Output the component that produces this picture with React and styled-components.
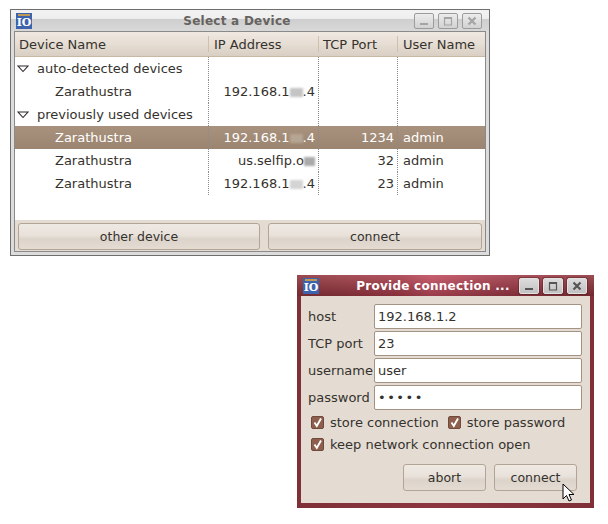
import React from "react";
import styled, { createGlobalStyle } from "styled-components";

const Global = createGlobalStyle`
  html, body { margin: 0; padding: 0; background: #fff; }
  body {
    font-family: "DejaVu Sans", sans-serif;
    font-size: 13px;
    color: #35322d;
  }
`;

const Page = styled.div`
  width: 608px;
  height: 524px;
  padding: 9px 0 0 10px;
  box-sizing: border-box;
  overflow: hidden;
`;

const DeviceWindow = styled.div`
  width: 480px;
  height: 247px;
  box-sizing: border-box;
  border: 1px solid #6f6f6f;
  background: #dcdcdc;
  display: flex;
  flex-direction: column;
`;

const TitleBar = styled.div`
  height: 21px;
  flex: none;
  display: flex;
  align-items: center;
  padding: 0 7px 0 ${(p) => (p.$active ? 6 : 5)}px;
  background: ${(p) =>
    p.$active
      ? "linear-gradient(180deg, rgba(255,255,255,.12), rgba(0,0,0,.2)), linear-gradient(90deg, #8d333a 0%, #a83c4a 35%, #c04a5c 45%, #a03a48 70%, #8d333a 100%)"
      : "linear-gradient(180deg, #f2f2f2 0%, #efefef 40%, #cfcfcf 45%, #d8d8d8 100%)"};
`;

const AppIcon = styled.div`
  width: 16px;
  height: 16px;
  flex: none;
  background: linear-gradient(#c09a55, #c09a55) 2px 1px / 12px 2px no-repeat, #3d63ad;
  color: #fff;
  font-family: "DejaVu Serif", serif;
  font-weight: 700;
  font-size: 11px;
  line-height: 20px;
  text-align: center;
  overflow: hidden;
`;

const Title = styled.div`
  flex: 1;
  text-align: center;
  font-weight: 700;
  font-size: 12px;
  letter-spacing: 0.25px;
  padding-left: 28px;
  color: ${(p) => (p.$active ? "#fff" : "#66625e")};
`;

const WinButtons = styled.div`
  display: flex;
  gap: 4px;
  flex: none;
`;

const WinButton = styled.div`
  width: 18px;
  height: 14px;
  border: 1px solid ${(p) => (p.$active ? "#e2e2e2" : "#9c9c9c")};
  border-radius: 2px;
  box-shadow: ${(p) => (p.$active ? "0 0 0 1px rgba(70, 20, 20, 0.35)" : "none")};
  background: ${(p) => (p.$active ? "linear-gradient(180deg, #dcdcdc, #c2c2c2)" : "linear-gradient(180deg, #ececec, #d2d2d2)")};
  display: flex;
  align-items: center;
  justify-content: center;
  svg { display: block; }
`;

const WindowBody = styled.div`
  flex: 1;
  margin: 0 3px 3px 3px;
  border: 1px solid #8a8a8a;
  display: flex;
  flex-direction: column;
  background: #fff;
`;

const grid = "194px 110px 79px 1fr";

const HeaderRow = styled.div`
  height: 24px;
  flex: none;
  display: grid;
  grid-template-columns: ${grid};
  background: linear-gradient(180deg, #f0e9e2 0%, #e6ddd3 50%, #d9cfc3 100%);
  border-bottom: 1px solid #c9b8a4;
`;

const HeaderCell = styled.div`
  padding-left: ${(p) => p.$pad || 4}px;
  line-height: 26px;
  white-space: nowrap;
  position: relative;
  &:not(:last-child)::after {
    content: "";
    position: absolute;
    right: 0;
    top: 4px;
    height: 16px;
    width: 1px;
    background: #d0c0ae;
  }
`;

const TableBody = styled.div`
  flex: 1;
`;

const Row = styled.div`
  height: 23px;
  display: grid;
  grid-template-columns: ${grid};
  background: ${(p) => (p.$selected ? "linear-gradient(180deg, #a8927d, #9c8570)" : "#fff")};
  color: ${(p) => (p.$selected ? "#fff" : "#35322d")};
`;

const Cell = styled.div`
  line-height: 23px;
  white-space: nowrap;
  box-sizing: border-box;
  text-align: ${(p) => (p.$right ? "right" : "left")};
  padding: ${(p) => (p.$right ? "0 3px 0 0" : p.$indent ? "0 0 0 40px" : p.$last ? "0 0 0 5px" : "0 0 0 4px")};
  border-right: ${(p) => (p.$last ? "none" : "1px dotted #8b8b8b")};
`;

const GroupLabel = styled.div`
  display: flex;
  align-items: center;
  gap: 8px;
  padding-left: 2px;
  line-height: 23px;
  white-space: nowrap;
  border-right: 1px dotted #8b8b8b;
  svg { flex: none; }
`;

const Smudge = styled.span`
  display: inline-block;
  width: ${(p) => p.$w}px;
  height: 9px;
  vertical-align: -1px;
  background: ${(p) => p.$color};
  filter: blur(1.2px);
`;

const ButtonBar = styled.div`
  height: 31px;
  flex: none;
  box-sizing: border-box;
  background: #e4dcd3;
  display: flex;
  gap: 8px;
  padding: 3px 3px 1px 3px;
`;

const PushButton = styled.div`
  width: ${(p) => p.$w}px;
  height: 27px;
  flex: none;
  box-sizing: border-box;
  border: 1px solid #b3a595;
  border-radius: 3px;
  background: linear-gradient(180deg, #efe9e3 0%, #e9e2db 45%, #dcd4ca 60%, #e4dcd3 100%);
  display: flex;
  align-items: center;
  justify-content: center;
  font-size: 12.5px;
  position: relative;
`;

const ConnectionWindow = styled.div`
  width: 297px;
  height: 233px;
  margin: 19px 0 0 287px;
  box-sizing: border-box;
  background: linear-gradient(90deg, #7f2f36 0%, #8e3640 50%, #7f2f36 100%);
  display: flex;
  flex-direction: column;
`;

const FormBody = styled.div`
  flex: 1;
  margin: 0 4px 5px 4px;
  background: #e4dcd3;
  padding: 8px 8px 0 7px;
  display: flex;
  flex-direction: column;
`;

const Field = styled.div`
  display: grid;
  grid-template-columns: 66px 1fr;
  align-items: start;
  height: 27px;
`;

const FieldLabel = styled.div`
  white-space: nowrap;
  line-height: 25px;
`;

const Input = styled.div`
  height: 25px;
  box-sizing: border-box;
  background: #fff;
  border: 1px solid #a39383;
  border-radius: 2px;
  padding-left: 3px;
  line-height: 23px;
`;

const Dots = styled.span`
  letter-spacing: 1.5px;
`;

const CheckGroup = styled.div`
  margin: -1px 0 1px;
`;

const CheckRow = styled.div`
  display: flex;
  align-items: center;
  height: 22px;
  padding-left: 3px;
  gap: 6px;
`;

const Check = styled.div`
  width: 13px;
  height: 13px;
  flex: none;
  box-sizing: border-box;
  background: #8e5f4c;
  border: 1px solid #6f4a3b;
  border-radius: 2px;
  display: flex;
  align-items: center;
  justify-content: center;
`;

const CheckLabel = styled.span`
  margin-right: ${(p) => p.$gap || 0}px;
  white-space: nowrap;
`;

const FormActions = styled.div`
  display: flex;
  justify-content: flex-end;
  gap: 8px;
  margin-top: 8px;
  padding-right: 5px;
`;

const Cursor = styled.svg`
  position: absolute;
  right: 0;
  bottom: -13px;
`;

const Triangle = () => (
  <svg width="12" height="8" viewBox="0 0 12 8">
    <path d="M1 1 H11 L6 6.5 Z" fill="#fff" stroke="#2e2b26" strokeWidth="1.1" />
  </svg>
);

const Tick = () => (
  <svg width="11" height="11" viewBox="0 0 11 11">
    <path d="M2.5 5.5 L4.8 9 L9 1.5" fill="none" stroke="#fff" strokeWidth="1.9" />
  </svg>
);

const WindowControls = ({ active }) => {
  const c = active ? "#555" : "#a4a4a4";
  return (
    <WinButtons>
      <WinButton $active={active}>
        <svg width="10" height="10"><rect x="1" y="7" width="8" height="2" fill={c} /></svg>
      </WinButton>
      <WinButton $active={active}>
        <svg width="10" height="10">
          <path d="M1 1.5 H9 M1.5 1 V9 H8.5 V1" fill="none" stroke={c} strokeWidth="1.2" />
          <rect x="1" y="1" width="8" height="2" fill={c} />
        </svg>
      </WinButton>
      <WinButton $active={active}>
        <svg width="10" height="10"><path d="M1.5 1.5 L8.5 8.5 M8.5 1.5 L1.5 8.5" stroke={c} strokeWidth="2.2" /></svg>
      </WinButton>
    </WinButtons>
  );
};

const DeviceRow = ({ ip, port, user, selected }) => (
  <Row $selected={selected}>
    <Cell $indent>Zarathustra</Cell>
    <Cell $right>{ip}</Cell>
    <Cell $right>{port}</Cell>
    <Cell $last>{user}</Cell>
  </Row>
);

const GroupRow = ({ label }) => (
  <Row>
    <GroupLabel>
      <Triangle />
      {label}
    </GroupLabel>
    <Cell />
    <Cell />
    <Cell $last />
  </Row>
);

const smudged = (color) => (
  <>
    192.168.1<Smudge $w={13} $color={color} />.4
  </>
);

export default function App() {
  return (
    <Page>
      <Global />
      <DeviceWindow>
        <TitleBar>
          <AppIcon>IO</AppIcon>
          <Title>Select a Device</Title>
          <WindowControls />
        </TitleBar>
        <WindowBody>
          <HeaderRow>
            <HeaderCell>Device Name</HeaderCell>
            <HeaderCell $pad={5}>IP Address</HeaderCell>
            <HeaderCell>TCP Port</HeaderCell>
            <HeaderCell $pad={5}>User Name</HeaderCell>
          </HeaderRow>
          <TableBody>
            <GroupRow label="auto-detected devices" />
            <DeviceRow ip={smudged("#c4c4c4")} port="" user="" />
            <GroupRow label="previously used devices" />
            <DeviceRow selected ip={smudged("#b5a593")} port="1234" user="admin" />
            <DeviceRow
              ip={
                <>
                  us.selfip.o<Smudge $w={11} $color="#aaa" />
                </>
              }
              port="32"
              user="admin"
            />
            <DeviceRow ip={smudged("#d4d4d4")} port="23" user="admin" />
          </TableBody>
          <ButtonBar>
            <PushButton $w={242}>other device</PushButton>
            <PushButton $w={214}>connect</PushButton>
          </ButtonBar>
        </WindowBody>
      </DeviceWindow>

      <ConnectionWindow>
        <TitleBar $active>
          <AppIcon>IO</AppIcon>
          <Title $active>Provide connection ...</Title>
          <WindowControls active />
        </TitleBar>
        <FormBody>
          <Field>
            <FieldLabel>host</FieldLabel>
            <Input>192.168.1.2</Input>
          </Field>
          <Field>
            <FieldLabel>TCP port</FieldLabel>
            <Input>23</Input>
          </Field>
          <Field>
            <FieldLabel>username</FieldLabel>
            <Input>user</Input>
          </Field>
          <Field>
            <FieldLabel>password</FieldLabel>
            <Input><Dots>•••••</Dots></Input>
          </Field>
          <CheckGroup>
            <CheckRow>
              <Check><Tick /></Check>
              <CheckLabel $gap={3}>store connection</CheckLabel>
              <Check><Tick /></Check>
              <CheckLabel>store password</CheckLabel>
            </CheckRow>
            <CheckRow>
              <Check><Tick /></Check>
              <CheckLabel>keep network connection open</CheckLabel>
            </CheckRow>
          </CheckGroup>
          <FormActions>
            <PushButton $w={83}>abort</PushButton>
            <PushButton $w={83}>
              connect
              <Cursor width="14" height="20" viewBox="0 0 14 20">
                <path d="M1 1 V16 L4.5 12.5 L7 18 L9.5 17 L7 11.5 H12 Z" fill="#fff" stroke="#000" strokeWidth="1" />
              </Cursor>
            </PushButton>
          </FormActions>
        </FormBody>
      </ConnectionWindow>
    </Page>
  );
}
